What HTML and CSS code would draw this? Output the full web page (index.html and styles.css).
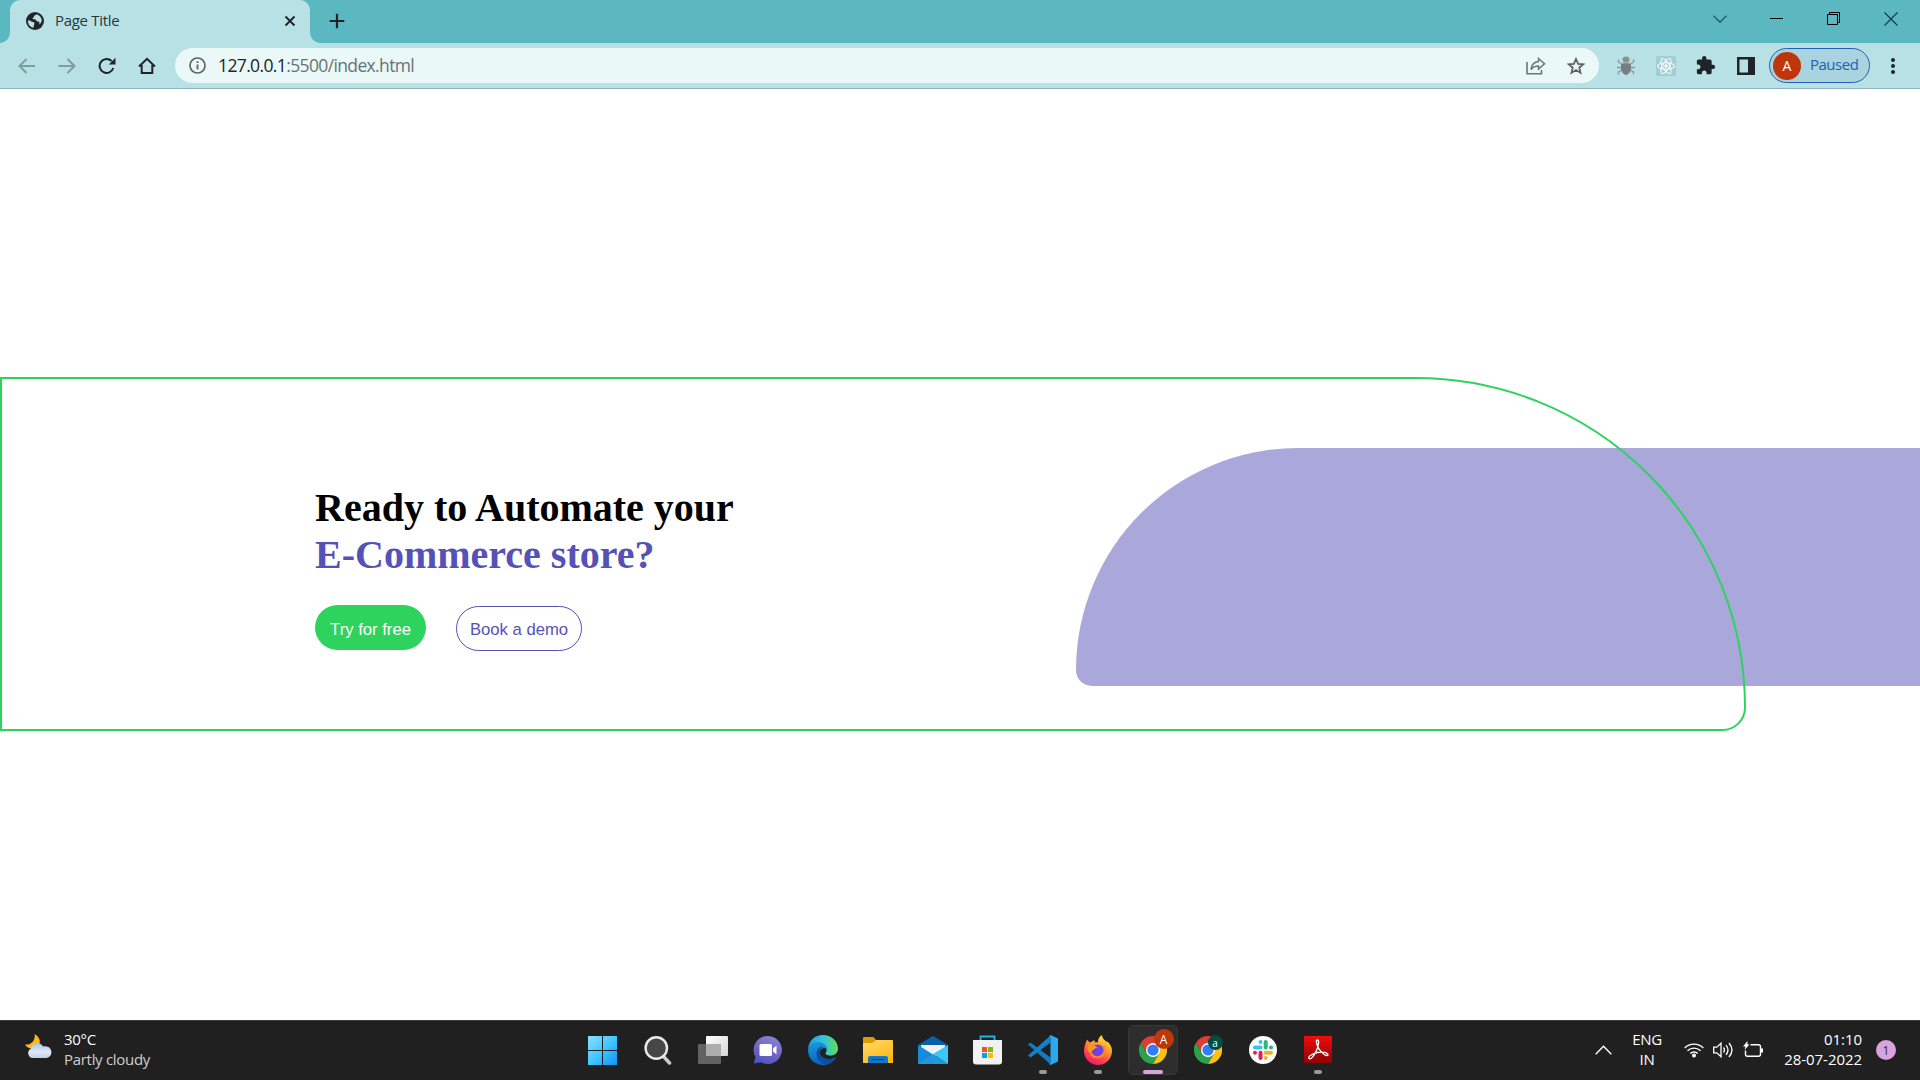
FILE: index.html
```html
<!DOCTYPE html>
<html lang="en">
<head>
<meta charset="utf-8">
<title>Page Title</title>
<link rel="stylesheet" href="styles.css">
</head>
<body>
<div class="screen">
  <header class="tabstrip">
    <div class="tab">
      <svg class="favicon" width="18" height="18" viewBox="0 0 18 18"><circle cx="9" cy="9" r="9" fill="#202428"/><path d="M2 8.2C3 8.2 4.4 8.6 5.4 9.4c.8.6 1.900.3 2.600.9.8.7.2 1.600.1 2.500-.1.8-.5 1.400-.6 3C4.300 15.200 1.800 12.600 2 8.200Z" fill="#b8e1e5"/><path d="M10.500 2.200c-.4.9-1.300.9-1.900 1.300-.8.500-.4 1.400-1.200 1.900-.7.500-1 .9-.6 1.500.5.700 1.800.1 2.700.5.8.4.7 1.500 1.500 1.900.8.400 1.900 0 2.400.9.300.6-.2 1.500-.2 2.300 1.800-1.200 2.700-3 2.500-5C15.200 5 13 2.700 10.500 2.200Z" fill="#b8e1e5"/></svg>
      <span class="tab-title">Page Title</span>
      <svg class="tab-close" width="12" height="12" viewBox="0 0 12 12"><path d="M1.500 1.500 10.500 10.500M10.500 1.500 1.500 10.500" stroke="#202428" stroke-width="1.900" fill="none"/></svg>
    </div>
    <svg class="new-tab" width="16" height="16" viewBox="0 0 16 16"><path d="M8 .7V15.300M.7 8H15.300" stroke="#202428" stroke-width="2.200"/></svg>
    <div class="window-controls">
      <span><svg width="14" height="8" viewBox="0 0 14 8"><path d="M.5 .7 7 7.200 13.500 .7" stroke="#24494d" stroke-width="1.200" fill="none"/></svg></span>
      <span><svg width="13" height="2" viewBox="0 0 13 2"><path d="M0 .5H13" stroke="#000"/></svg></span>
      <span><svg width="14" height="14" viewBox="0 0 14 14"><path d="M.5 2.500H10.500V12.500H.5ZM2.500 2.500V.5H12.500V10.500H10.500" stroke="#000" fill="none"/></svg></span>
      <span><svg width="14" height="14" viewBox="0 0 14 14"><path d="M.5 .5 13.500 13.500M13.500 .5 .5 13.500" stroke="#143c40" stroke-width="1.200"/></svg></span>
    </div>
  </header>

  <nav class="toolbar">
    <span class="tool"><svg width="18" height="16" viewBox="0 0 18 16"><path d="M17 8H2M8.500 1 1.500 8 8.500 15" stroke="#7f9da1" stroke-width="2" fill="none"/></svg></span>
    <span class="tool"><svg width="18" height="16" viewBox="0 0 18 16"><path d="M.5 8H16M9.500 1 16.500 8 9.500 15" stroke="#7f9da1" stroke-width="2" fill="none"/></svg></span>
    <span class="tool"><svg width="18" height="18" viewBox="0 0 18 18"><path d="M15.300 11A7 7 0 1 1 13.600 4" stroke="#202428" stroke-width="2" fill="none"/><path d="M17.500 .8V7.500H10.800Z" fill="#202428"/></svg></span>
    <span class="tool"><svg width="18" height="18" viewBox="0 0 18 18"><path d="M1 9.500 9 1.800 17 9.500M3.700 8V16H14.300V8" stroke="#202428" stroke-width="2" fill="none"/></svg></span>
    <div class="omnibox">
      <svg width="17" height="17" viewBox="0 0 17 17"><circle cx="8.500" cy="8.500" r="7.500" stroke="#5f6368" stroke-width="1.700" fill="none"/><path d="M8.500 7.400V12.500M8.500 4.300V6.100" stroke="#5f6368" stroke-width="1.800"/></svg>
      <span class="url"><b>127.0.0.1</b>:5500/index.html</span>
      <svg width="20" height="18" viewBox="0 0 20 18"><path d="M1 5V16.800H15.500V13" stroke="#6c7477" stroke-width="1.600" fill="none"/><path d="M12.500 1.500 18.500 6.700 12.500 12V8.900C9 8.900 6.800 10 5 12.500 5.500 8.500 8 5 12.500 4.500Z" stroke="#6c7477" stroke-width="1.500" fill="none"/></svg>
      <svg class="star" width="18" height="18" viewBox="0 0 18 18"><path d="M9 2 11.100 6.800 16.300 7.300 12.300 10.700 13.500 15.900 9 13.100 4.500 15.900 5.700 10.700 1.700 7.300 6.900 6.800Z" stroke="#5f6368" stroke-width="1.800" fill="none"/></svg>
    </div>
    <div class="extensions">
      <span class="tool"><svg width="18" height="20" viewBox="0 0 18 20"><path d="M5 8 1.500 6V3.500M13 8 16.500 6V3.500M5 11.500H0M13 11.500H18M5 14 1.500 16V18.500M13 14 16.500 16V18.500" stroke="#8b9a9d" stroke-width="1.300" fill="none"/><ellipse cx="9" cy="3.500" rx="3.500" ry="3" fill="#8b9092"/><path d="M4 7.500Q9 4.500 14 7.500V13Q13 18 9 19 5 18 4 13Z" fill="#777d80"/><path d="M4.500 7.500Q9 5.500 13.500 7.500" stroke="#b2bbbd" fill="none"/></svg></span>
      <span class="tool"><svg width="20" height="20" viewBox="0 0 20 20"><rect width="20" height="20" rx="1" fill="#a4cfd2"/><g fill="none" stroke="#f4fbfb" stroke-width="1.100"><ellipse cx="10" cy="10" rx="8.500" ry="3.300"/><ellipse cx="10" cy="10" rx="8.500" ry="3.300" transform="rotate(60 10 10)"/><ellipse cx="10" cy="10" rx="8.500" ry="3.300" transform="rotate(120 10 10)"/></g><circle cx="10" cy="10" r="1.700" fill="#fff"/></svg></span>
      <span class="tool"><svg width="20" height="20" viewBox="1 1 23 23"><path fill="#202428" d="M20.500 11H19V7c0-1.100-.9-2-2-2h-4V3.500a2.500 2.500 0 0 0-5 0V5H4c-1.100 0-1.990.9-1.990 2v3.800H3.500c1.490 0 2.700 1.210 2.700 2.700s-1.210 2.700-2.700 2.700H2V20c0 1.100.9 2 2 2h3.800v-1.500c0-1.490 1.210-2.700 2.700-2.700s2.700 1.210 2.700 2.700V22H17c1.100 0 2-.9 2-2v-4h1.500a2.500 2.500 0 0 0 0-5z"/></svg></span>
      <span class="tool"><svg width="18" height="18" viewBox="0 0 18 18"><path d="M0 0H18V18H0ZM2.500 2.500V15.500H11V2.500Z" fill="#202428" fill-rule="evenodd"/></svg></span>
    </div>
    <div class="profile"><span class="avatar">A</span><span class="paused">Paused</span></div>
    <span class="tool"><svg width="4" height="18" viewBox="0 0 4 18"><circle cx="2" cy="3" r="2" fill="#202428"/><circle cx="2" cy="9" r="2" fill="#202428"/><circle cx="2" cy="15" r="2" fill="#202428"/></svg></span>
  </nav>

  <main class="page">
    <section class="banner">
      <div class="shape"></div>
      <div class="outline">
        <h1>Ready to Automate your<br><span>E-Commerce store?</span></h1>
        <div class="actions">
          <button class="try">Try for free</button>
          <button class="demo">Book a demo</button>
        </div>
      </div>
    </section>
  </main>

  <footer class="taskbar">
    <div class="weather">
      <svg width="27" height="25" viewBox="0 0 27 25"><defs><linearGradient id="cloud" x2="0" y2="1"><stop stop-color="#a9c3e8"/><stop offset=".6" stop-color="#dfe9f5"/><stop offset="1" stop-color="#c3cfe2"/></linearGradient></defs><path d="M9.500 0C15 3 17 9 12 13 8 16 2 14.500 0 10.500 6 11.500 11 6 9.500 0Z" fill="#fdb813"/><path d="M8 24A5 5 0 0 1 6 14.500C7 9 15 7 18 12.500 28 10.500 29 23 21.500 24Z" fill="url(#cloud)"/></svg>
      <div class="stack"><span>30°C</span><span class="dim">Partly cloudy</span></div>
    </div>

    <div class="apps">
      <span class="app"><svg width="30" height="30" viewBox="0 0 30 30"><defs><linearGradient id="win" x2="1" y2="1"><stop stop-color="#86e0ff"/><stop offset=".5" stop-color="#44c7fd"/><stop offset="1" stop-color="#0f93f5"/></linearGradient></defs><path fill="url(#win)" d="M0 1H14V15H0ZM15 1H29V15H15ZM0 16H14V30H0ZM15 16H29V30H15Z"/></svg></span>
      <span class="app"><svg width="30" height="30" viewBox="0 0 30 30"><path d="M20.500 21.500 26.500 28" stroke="#c9c9ce" stroke-width="3.500" stroke-linecap="round"/><circle cx="13.300" cy="13" r="10.700" fill="#464646" stroke="#e8eaec" stroke-width="2.400"/></svg></span>
      <span class="app"><svg width="32" height="30" viewBox="0 0 32 30"><defs><linearGradient id="tv" x2="1" y2="1"><stop stop-color="#fff"/><stop offset="1" stop-color="#d5d5d5"/></linearGradient></defs><rect x="9" y="1" width="22" height="20" rx="1" fill="url(#tv)"/><rect x="1" y="9" width="23" height="20" rx="1" fill="#626262"/><rect x="9" y="9" width="15" height="12" fill="#adadad"/></svg></span>
      <span class="app"><svg width="30" height="30" viewBox="0 0 30 30"><defs><linearGradient id="chat" x1=".7" y1="0" x2=".3" y2="1"><stop stop-color="#7b87d8"/><stop offset=".5" stop-color="#7765c2"/><stop offset="1" stop-color="#4f55c4"/></linearGradient></defs><path d="M15 1A14 14 0 1 1 8 27.200L.8 28.500 2.500 22A14 14 0 0 1 15 1Z" fill="url(#chat)"/><rect x="6.500" y="9" width="12.500" height="12" rx="1.500" fill="#fff"/><path d="M20 13.500 23.500 10.500V19.500L20 16.500Z" fill="#fff"/></svg></span>
      <span class="app"><svg width="30" height="30" viewBox="0 0 30 30"><defs><linearGradient id="edgeTop"><stop stop-color="#1e9ee3"/><stop offset=".5" stop-color="#32c2df"/><stop offset="1" stop-color="#61dc54"/></linearGradient><linearGradient id="edgeLow" x2=".3" y2="1"><stop stop-color="#1b9ce3"/><stop offset="1" stop-color="#0863b8"/></linearGradient></defs><path d="M0 14C1 5 7 0 15 0 24 0 30 6.500 30 13.500 30 18 26.500 20.500 22.500 20.500 19 20.500 17 19 17.500 18 20 15 18.500 9.500 11 8.500 5 7.700 1.500 10.500 0 14Z" fill="url(#edgeTop)"/><path d="M0 15C1 8.500 6 6.500 10.500 7 16 7.500 19.500 11 19 15 18.500 12.500 13 11.500 12 17 11 23 19 27 27.500 22.500 25 27.500 20 30 15 30 6.500 30 0 23.500 0 15Z" fill="url(#edgeLow)"/><path d="M13 11.700C8 13.500 7.500 20 10 24 12 27.500 16 29.500 19 29.500 23 28.500 26 26 28 22.800 27.500 22 27 22.500 26.500 22.700 19 26 11.500 22 12 16.500 12.200 14.500 13 13 15 12Z" fill="#0c4f9e"/></svg></span>
      <span class="app"><svg width="30" height="30" viewBox="0 0 30 30"><defs><linearGradient id="folder" x2=".7" y2="1"><stop stop-color="#ffdc6b"/><stop offset="1" stop-color="#fbb813"/></linearGradient></defs><path d="M0 3Q0 2 1 2H10.500L13 5V9H0Z" fill="#dd9a04"/><path d="M0 8H9.500L13 5H29Q30 5 30 6V28H0Z" fill="url(#folder)"/><path d="M5 28V23Q5 21 7 21H23Q25 21 25 23V28Z" fill="#1279c8"/><path d="M8.500 24.500H21.500" stroke="#064c8e" stroke-width="1.300"/></svg></span>
      <span class="app"><svg width="30" height="30" viewBox="0 0 30 30"><path d="M0 10 15 1 30 10V16H0Z" fill="#0861ae"/><path d="M3 10H27V16L15 22 3 16Z" fill="#f2f2f2"/><path d="M0 10 30 29H0Z" fill="#168bdb"/><path d="M30 10V29L15 19Z" fill="#3bc8f3"/><path d="M0 29 15 19 30 29Z" fill="#2098dc"/></svg></span>
      <span class="app"><svg width="30" height="30" viewBox="1 0 30 30"><path d="M8.500 7V1.500H22.500V7" stroke="#1fb5e8" stroke-width="1.800" fill="none"/><path d="M1 5H30V26.500Q30 29.500 27 29.500H4Q1 29.500 1 26.500Z" fill="#f1f1f1"/><path d="M10 12H15V17H10Z" fill="#f25022"/><path d="M16 12H21V17H16Z" fill="#7fba00"/><path d="M10 18H15V23H10Z" fill="#00a4ef"/><path d="M16 18H21V23H16Z" fill="#ffb900"/></svg></span>
      <span class="app"><svg width="30" height="30" viewBox="0 0 30 30"><path d="M0 9.500 2.500 7.500 22.500 22.500V29.500Z" fill="#1479bd"/><path d="M0 20.500 2.500 22.500 22.500 7.500V.5Z" fill="#0f82cf"/><path d="M21.500 .5 22.500 0 30 3.500V26.500L22.500 30 21.500 29.500 22.500 27V3Z" fill="#2aa9f0"/></svg><i></i></span>
      <span class="app"><svg width="30" height="30" viewBox="0 0 30 30"><defs><linearGradient id="fox" x1=".8" y1="0" x2=".3" y2="1"><stop stop-color="#ffe848"/><stop offset=".4" stop-color="#ff9d2d"/><stop offset=".7" stop-color="#ff4b45"/><stop offset="1" stop-color="#ed137c"/></linearGradient></defs><path d="M4 4.500C5 6 6 7 7.500 7.500 9 6 10.500 5.500 12 5.500L11.500 7.500C13 7 14.500 7.200 15 7.500 14.500 5 16 1.500 19 0 19 3 21 4.500 23 6.500L25 7C28 10 29 13 29 16A14 14 0 0 1 1 16C1 12 2.500 8 4 4.500Z" fill="url(#fox)"/><circle cx="14.800" cy="15.500" r="6" fill="#7044d6"/><path d="M4.500 11C8 9 12 10 14.500 12.500 12 13 11 15 8.500 16L8 19C5 17 4 14 4.500 11Z" fill="#ff9528"/><path d="M20 11C24 15 21 22 14 22.500 10 22 8.500 20 8 18" stroke="#ff862b" stroke-width="2.200" fill="none"/></svg><i></i></span>
      <span class="app active"><svg width="28" height="28" viewBox="0 0 48 48"><path fill="#dd3e32" d="M3.200 12A24 24 0 0 1 44.800 12H24L13.600 30Z"/><path fill="#2aa24c" d="M3.200 12 13.600 30H34.400L24 48A24 24 0 0 1 3.200 12Z"/><path fill="#fbc116" d="M44.800 12H24L34.400 30 24 48A24 24 0 0 0 44.800 12Z"/><circle cx="24" cy="24" r="12" fill="#fff"/><circle cx="24" cy="24" r="9.600" fill="#317df1"/></svg><em class="badge-a">A</em><i></i></span>
      <span class="app"><svg width="28" height="28" viewBox="0 0 48 48"><path fill="#dd3e32" d="M3.200 12A24 24 0 0 1 44.800 12H24L13.600 30Z"/><path fill="#2aa24c" d="M3.200 12 13.600 30H34.400L24 48A24 24 0 0 1 3.200 12Z"/><path fill="#fbc116" d="M44.800 12H24L34.400 30 24 48A24 24 0 0 0 44.800 12Z"/><circle cx="24" cy="24" r="12" fill="#fff"/><circle cx="24" cy="24" r="9.600" fill="#317df1"/></svg><em class="badge-b">a</em></span>
      <span class="app"><svg width="28" height="28" viewBox="0 0 28 28"><circle cx="14" cy="14" r="14" fill="#fff"/><g fill="none" stroke-width="4" stroke-linecap="round"><path d="M6 11.500H11.500M11.500 6V6.100" stroke="#36c5f0"/><path d="M16.700 6V11.500M22 11.500V11.600" stroke="#2eb67d"/><path d="M16.700 16.700H22M16.700 22V22.100" stroke="#ecb22e"/><path d="M11.500 16.700V22M6 16.700V16.800" stroke="#e01e5a"/></g></svg></span>
      <span class="app"><svg width="28" height="28" viewBox="0 0 28 28"><defs><linearGradient id="pdf" x2="0" y2="1"><stop stop-color="#f20d0d"/><stop offset="1" stop-color="#8e0000"/></linearGradient></defs><rect y="0" width="28" height="27" fill="url(#pdf)"/><path d="M5 22.500C3 21 9 17.500 13 16.500 18 15.500 24 16.500 24 19 22 21.500 15 14.500 13.500 10 12 6 12 4 13.500 4 15.500 4 14.500 10 12.500 14.500 10 20 7 24 5 22.500Z" fill="none" stroke="#fff" stroke-width="1.300"/></svg><i></i></span>
    </div>

    <div class="tray">
      <svg class="caret" width="17" height="10" viewBox="0 0 17 10"><path d="M.7 9.200 8.500 1.200 16.300 9.200" stroke="#fff" stroke-width="1.400" fill="none"/></svg>
      <div class="stack lang"><span>ENG</span><span>IN</span></div>
      <div class="status">
        <svg width="20" height="16" viewBox="0 0 20 16"><path d="M.7 6A13 13 0 0 1 19.300 6M3.500 8.800A9.200 9.200 0 0 1 16.500 8.800M6.300 11.500A5.200 5.200 0 0 1 13.700 11.500" stroke="#fff" stroke-width="1.400" fill="none"/><circle cx="10" cy="13.500" r="2" fill="#fff"/></svg>
        <svg width="21" height="18" viewBox="0 0 21 18"><path d="M.7 6.200H3.800L8 2.300V15.700L3.800 11.800H.7Z" stroke="#fff" stroke-width="1.300" fill="none"/><path d="M10.500 6.500Q12.500 9 10.500 11.500M13 4.200Q17 9 13 13.800M16 2Q22 9 16 16" stroke="#fff" stroke-width="1.300" fill="none"/></svg>
        <svg width="21" height="18" viewBox="0 0 21 18"><path d="M7.500 3.700H15.500Q17.500 3.700 17.500 5.700V13.300Q17.500 15.300 15.500 15.300H4.500Q2.500 15.300 2.500 13.300V9.500" stroke="#fff" stroke-width="1.400" fill="none"/><path d="M18 7.500H20V11.500H18ZM4.500 0 0 5.500H2.500L1.500 9 6.500 3.500H4.500Z" fill="#fff"/></svg>
      </div>
      <div class="stack clock"><span>01:10</span><span>28-07-2022</span></div>
      <span class="notice">1</span>
    </div>
  </footer>
</div>
</body>
</html>
```
FILE: styles.css
```css
* { box-sizing: border-box; }
body { margin: 0; font-family: "Open Sans", "Noto Sans", sans-serif; background: #fff; }
svg { display: block; flex: none; }
.screen { width: 1920px; height: 1080px; display: flex; flex-direction: column; overflow: hidden; }

/* tab strip */
.tabstrip { height: 43px; flex: none; display: flex; background: #5bb7c0; padding-left: 10px; }
.tab { position: relative; width: 300px; background: #b8e1e5; border-radius: 10px 10px 0 0; display: flex; align-items: center; padding: 0 14px 1px 16px; }
.tab::before, .tab::after { content: ""; position: absolute; bottom: 0; width: 10px; height: 10px; }
.tab::before { left: -10px; background: radial-gradient(circle at 0 0, transparent 9.5px, #b8e1e5 10px); }
.tab::after { right: -10px; background: radial-gradient(circle at 100% 0, transparent 9.5px, #b8e1e5 10px); }
.tab-title { flex: 1; margin: -2px 0 0 11px; font-size: 15px; letter-spacing: -.3px; color: #26393c; line-height: 20px; }
.new-tab { margin: 13px 0 0 19px; }
.window-controls { margin-left: auto; width: 229px; height: 37px; display: grid; grid-template-columns: repeat(4, 1fr); }
.window-controls span { display: flex; align-items: center; justify-content: center; }

/* toolbar */
.toolbar { height: 46px; flex: none; display: flex; align-items: center; background: #b8e1e5; border-bottom: 1px solid #92b3ba; padding: 0 7px; }
.tool { width: 40px; height: 36px; flex: none; display: flex; align-items: center; justify-content: center; }
.omnibox { width: 1424px; height: 35px; flex: none; margin-left: 8px; border-radius: 18px; background: #ebf8f8; display: flex; align-items: center; padding: 0 14px; }
.url { flex: 1; margin: -2px 0 0 12px; font-size: 17.500px; line-height: 24px; letter-spacing: -.63px; color: #697174; }
.url b { font-weight: 400; color: #202428; }
.star { margin-left: 21px; }
.extensions { display: flex; margin: 0 1px 0 7px; }
.profile { width: 101px; height: 35px; flex: none; margin: 0 3px 0 2px; border: 1.500px solid #2360b4; border-radius: 18px; background: #a9d3de; display: flex; align-items: center; padding-left: 3px; }
.avatar { width: 28px; height: 28px; border-radius: 50%; background: #bf360c; color: #fff; font-size: 14px; display: flex; align-items: center; justify-content: center; }
.paused { margin: -4px 0 0 9px; font-size: 15px; letter-spacing: -.5px; color: #2360b4; line-height: 20px; }

/* page content */
.page { flex: 1; background: #fff; padding-top: 288px; }
.banner { position: relative; width: 1920px; height: 354px; }
.shape { position: absolute; right: 0; top: 71px; width: 844px; height: 238px; background: #aaa8db; border-radius: 350px 0 0 25px; }
.outline { position: relative; width: 1746px; height: 354px; border: 2px solid #2ed35d; border-radius: 0 350px 25px 0; padding: 105px 0 0 313px; }
h1 { margin: 0; font: bold 40px/47px "Liberation Serif", serif; color: #000; }
h1 span { color: #5552b7; }
.actions { display: flex; gap: 30px; margin-top: 27px; align-items: flex-start; }
button { height: 45px; border-radius: 23px; font: 16.670px/20px "Liberation Sans", sans-serif; padding: 4px 0 0; }
.try { width: 111px; border: 0; background: #2ed35d; color: #fff; }
.demo { width: 126px; margin-top: 1px; border: 1px solid #5552b7; background: #fff; color: #5552b7; padding-top: 2px; }

/* taskbar */
.taskbar { height: 60px; flex: none; display: grid; grid-template-columns: 1fr auto 1fr; background: #202020; border-top: 1px solid #393d3d; color: #fff; font-size: 15px; letter-spacing: -.3px; padding-bottom: 1px; }
.weather { display: flex; align-items: center; gap: 12px; padding-left: 25px; }
.weather svg { margin-top: -7px; }
.stack { display: flex; flex-direction: column; line-height: 20px; white-space: nowrap; margin-top: -2px; }
.dim { color: #cfcfcf; }
.apps { display: flex; align-items: center; gap: 5px; }
.app { position: relative; width: 50px; height: 50px; border-radius: 5px; display: flex; align-items: center; justify-content: center; letter-spacing: 0; }
.app i { position: absolute; left: 21px; bottom: 1px; width: 8px; height: 4px; border-radius: 2px; background: #999; }
.active { background: #2d2d2d; border: 1px solid #383838; }
.app.active i { left: 14px; bottom: 0; width: 20px; background: #d9a3dc; }
.app em { position: absolute; border-radius: 50%; display: flex; align-items: center; justify-content: center; font-style: normal; color: #fff; }
.badge-a { left: 25px; top: 3px; width: 20px; height: 20px; background: #bf360c; font-size: 12px; }
.badge-b { left: 25px; top: 10px; width: 15px; height: 15px; background: #004d40; font-size: 10px; }
.tray { display: flex; align-items: center; justify-content: flex-end; padding-right: 24px; }
.lang { width: 34px; margin: -2px 20px 0 18px; align-items: center; }
.status { display: flex; align-items: center; gap: 9px; }
.clock { width: 78px; margin: -2px 14px 0 20px; align-items: flex-end; letter-spacing: -.05px; }
.notice { width: 20px; height: 20px; border-radius: 50%; background: #d9a3dc; color: #333; font-size: 12px; letter-spacing: 0; display: flex; align-items: center; justify-content: center; }
```
